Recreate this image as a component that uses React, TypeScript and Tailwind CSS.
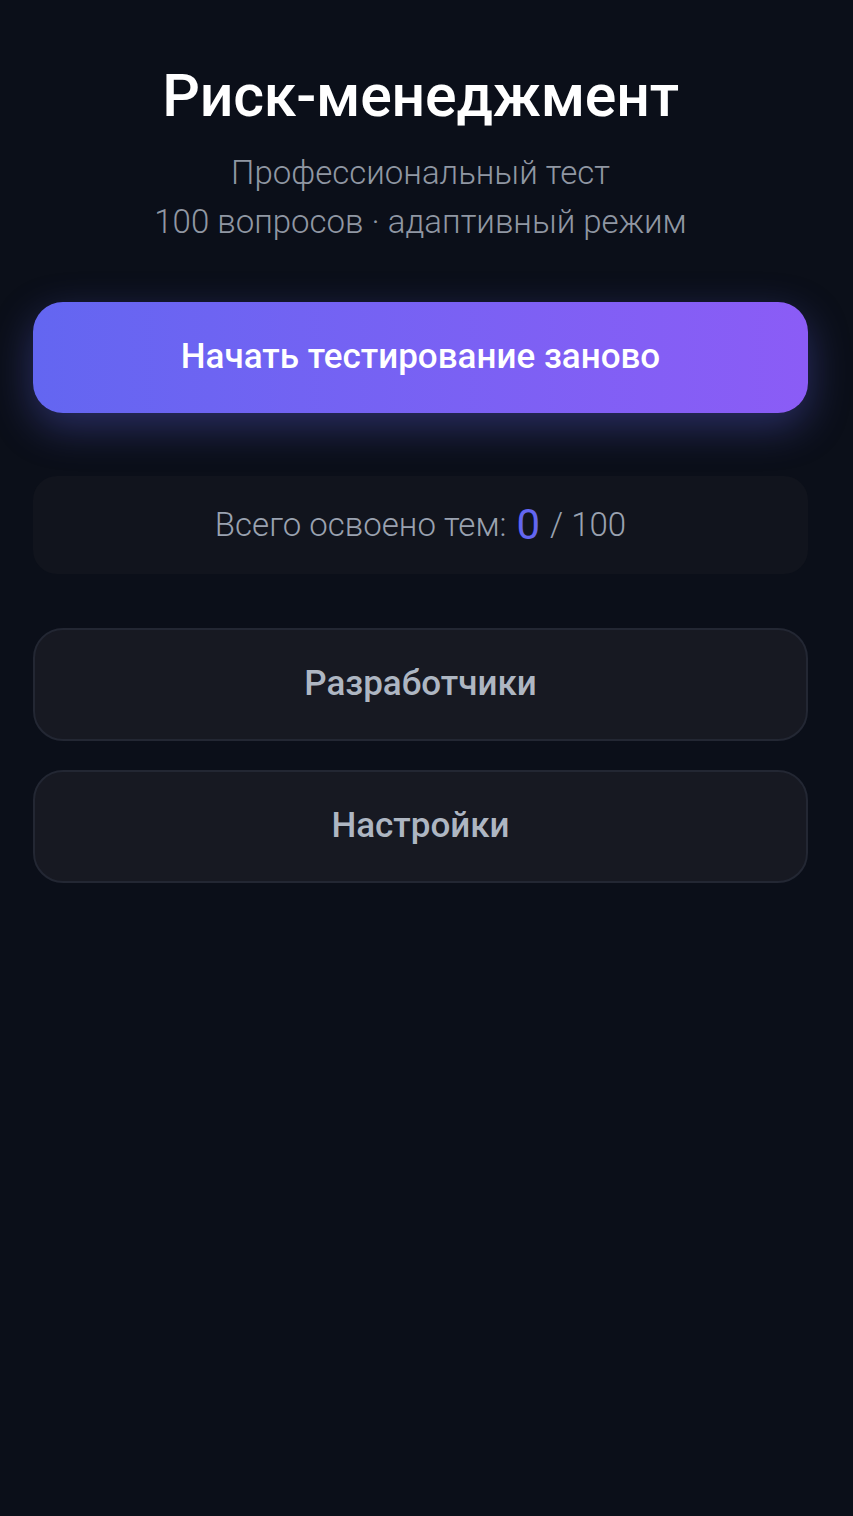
export default function App() {
  return (
    <div className="min-h-[1516px] w-full bg-[#0b0f19] font-['Roboto',sans-serif] pl-[33px] pr-[45px] pt-[60px]">
      {/* Header */}
      <div className="flex flex-col items-center">
        <h1 className="text-[59px] leading-[72px] font-medium text-white tracking-[-0.2px]">Риск-менеджмент</h1>
        <p className="mt-[16px] text-[33px] leading-[49px] font-light text-[#9097a3]">Профессиональный тест</p>
        <p className="text-[33px] leading-[49px] font-light text-[#9097a3]">100 вопросов · адаптивный режим</p>
      </div>

      {/* Main action */}
      <button className="mt-[56px] w-full h-[111px] rounded-[30px] bg-gradient-to-r from-[#6366f1] to-[#8b5cf6] text-white text-[35px] font-medium shadow-[0_14px_40px_rgba(99,102,241,0.35)]">
        Начать тестирование заново
      </button>

      {/* Progress */}
      <div className="mt-[63px] h-[98px] rounded-[24px] bg-[#11141d] flex items-center justify-center text-[33px] font-light text-[#9aa2b0]">
        <span>Всего освоено тем:</span>
        <span className="ml-[10px] text-[42px] font-normal leading-none text-[#6366f1]">0</span>
        <span className="ml-[10px]">/ 100</span>
      </div>

      {/* Secondary */}
      <div className="mt-[54px] flex flex-col gap-[29px]">
        <button className="w-full h-[113px] rounded-[30px] bg-[#171922] border-2 border-[#232733] text-[35px] font-medium text-[#aeb6c2]">
          Разработчики
        </button>
        <button className="w-full h-[113px] rounded-[30px] bg-[#171922] border-2 border-[#232733] text-[35px] font-medium text-[#aeb6c2]">
          Настройки
        </button>
      </div>
    </div>
  )
}
